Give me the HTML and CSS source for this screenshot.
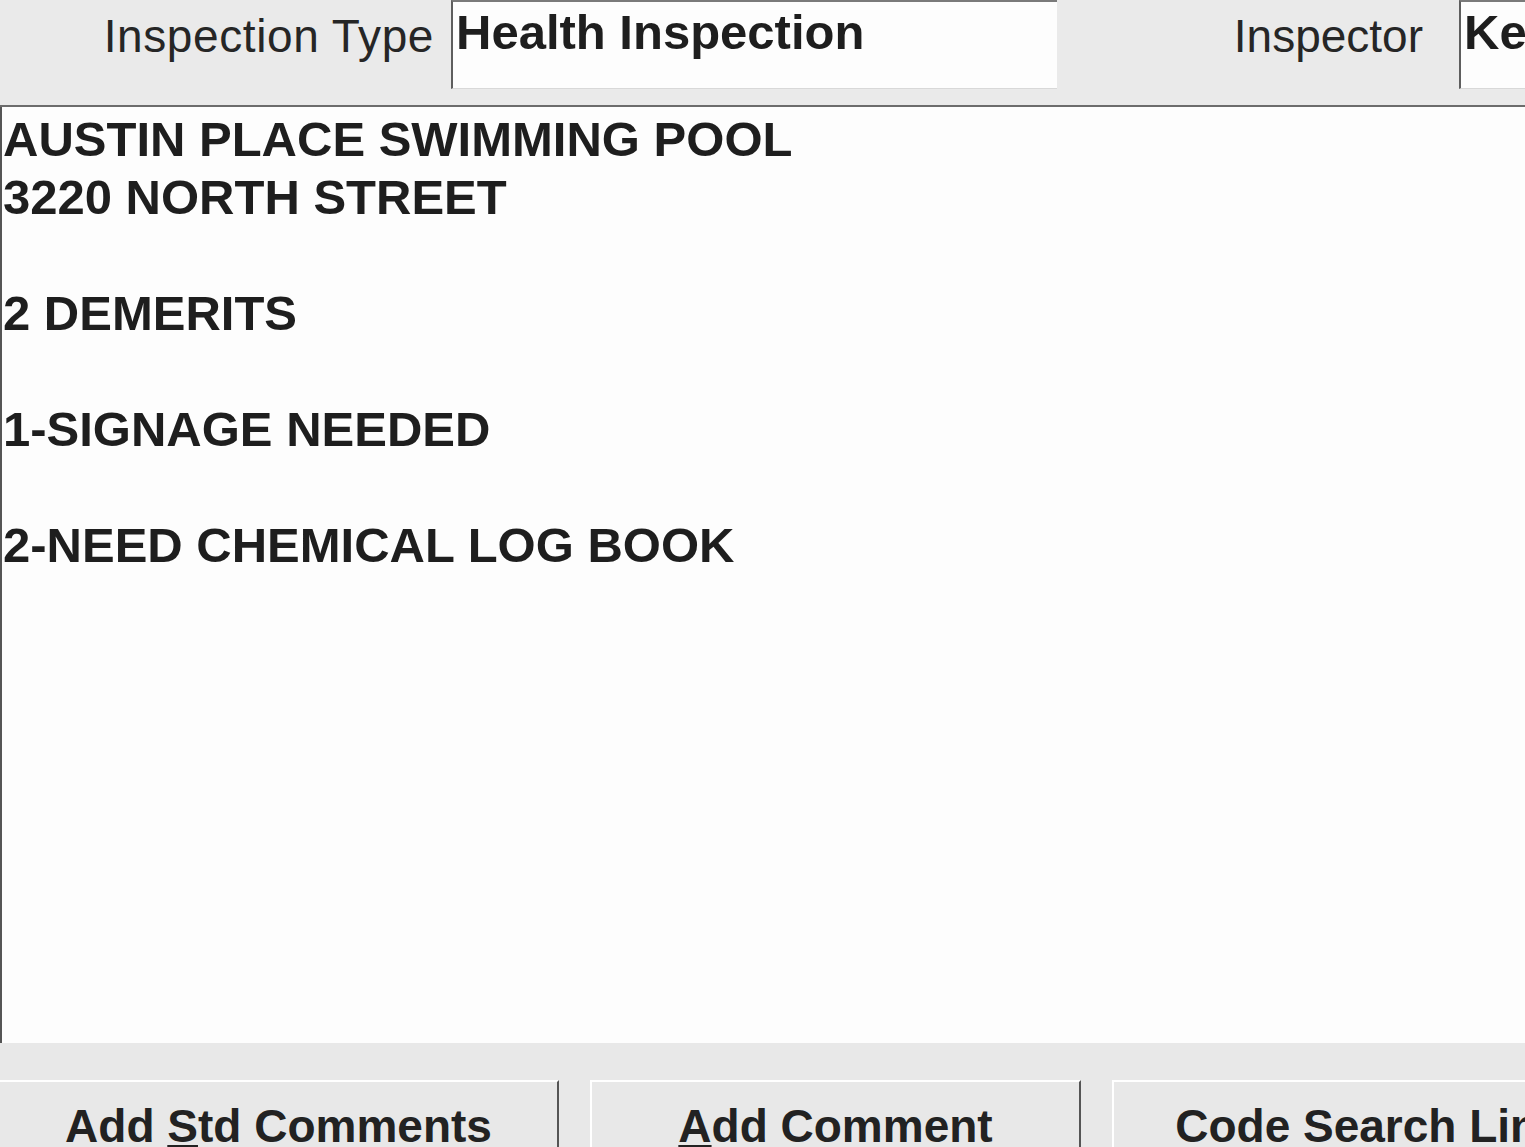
FILE: index.html
```html
<!DOCTYPE html>
<html lang="en">
<head>
<meta charset="utf-8">
<title>Inspection</title>
<link rel="stylesheet" href="styles.css">
</head>
<body>
<div class="screen">
  <header class="header">
    <label class="label label-type">Inspection Type</label>
    <div class="field field-type">Health Inspection</div>
    <label class="label label-inspector">Inspector</label>
    <div class="field field-inspector">Ke</div>
  </header>
  <main class="notes">
    <div class="line">AUSTIN PLACE SWIMMING POOL</div>
    <div class="line">3220 NORTH STREET</div>
    <div class="line">&nbsp;</div>
    <div class="line">2 DEMERITS</div>
    <div class="line">&nbsp;</div>
    <div class="line">1-SIGNAGE NEEDED</div>
    <div class="line">&nbsp;</div>
    <div class="line">2-NEED CHEMICAL LOG BOOK</div>
  </main>
  <footer class="actions">
    <button class="btn btn-std">Add <u>S</u>td Comments</button>
    <button class="btn btn-add"><u>A</u>dd Comment</button>
    <button class="btn btn-code">Code Search Link</button>
  </footer>
</div>
</body>
</html>
```

FILE: styles.css
```css
html, body {
  margin: 0;
  padding: 0;
  width: 1525px;
  height: 1147px;
  overflow: hidden;
  background: #e9e9e9;
}

.screen {
  width: 1525px;
  height: 1147px;
  display: flex;
  flex-direction: column;
  font-family: "Liberation Sans", Arial, sans-serif;
  color: #222;
  overflow: hidden;
}

.header {
  height: 105px;
  flex: 0 0 105px;
  display: flex;
  align-items: flex-start;
  border-bottom: 2px solid #6c6c6c;
  background: #eaeaea;
  overflow: hidden;
}

.label {
  font-size: 46px;
  line-height: 46px;
  padding-top: 13px;
  text-align: right;
  white-space: nowrap;
  color: #262626;
}

.label-type {
  width: 434px;
  flex: 0 0 434px;
  margin-right: 17px;
  letter-spacing: 0.6px;
}

.label-inspector {
  width: 366px;
  flex: 0 0 366px;
  margin-right: 36px;
}

.field {
  height: 80px;
  background: #fdfdfd;
  border-top: 2px solid #7a7a7a;
  border-left: 2px solid #5e5e5e;
  border-bottom: 1px solid #d8d8d8;
  padding: 6px 0 0 3px;
  font-size: 49px;
  line-height: 49px;
  font-weight: bold;
  color: #1e1e1e;
  white-space: nowrap;
  overflow: hidden;
}

.field-type {
  width: 601px;
  flex: 0 0 601px;
}

.field-inspector {
  width: 600px;
  flex: 0 0 600px;
}

.notes {
  flex: 0 0 936px;
  height: 936px;
  background: #fdfdfd;
  border-left: 2px solid #555;
  padding: 3px 0 0 1px;
  box-sizing: border-box;
  font-size: 49px;
  line-height: 58px;
  font-weight: bold;
  color: #1e1e1e;
  white-space: nowrap;
}

.actions {
  flex: 1 1 auto;
  display: flex;
  gap: 31px;
  padding-top: 37px;
  background: #e8e8e8;
}

.btn {
  flex: 0 0 auto;
  height: 90px;
  margin: 0;
  padding: 21px 0 21px 0;
  background: #e8e8e8;
  border: 0;
  border-top: 2px solid #ffffff;
  border-left: 2px solid #ffffff;
  border-right: 2px solid #555;
  font-family: "Liberation Sans", Arial, sans-serif;
  font-size: 46px;
  line-height: 46px;
  font-weight: bold;
  color: #222;
  text-align: center;
  white-space: nowrap;
  box-sizing: border-box;
  align-self: flex-start;
}

.btn u {
  text-decoration-thickness: 2px;
  text-underline-offset: 3px;
}

.btn-std {
  width: 559px;
  border-left: 0;
}

.btn-add {
  width: 491px;
}

.btn-code {
  width: 491px;
  padding-left: 24px;
}
```
